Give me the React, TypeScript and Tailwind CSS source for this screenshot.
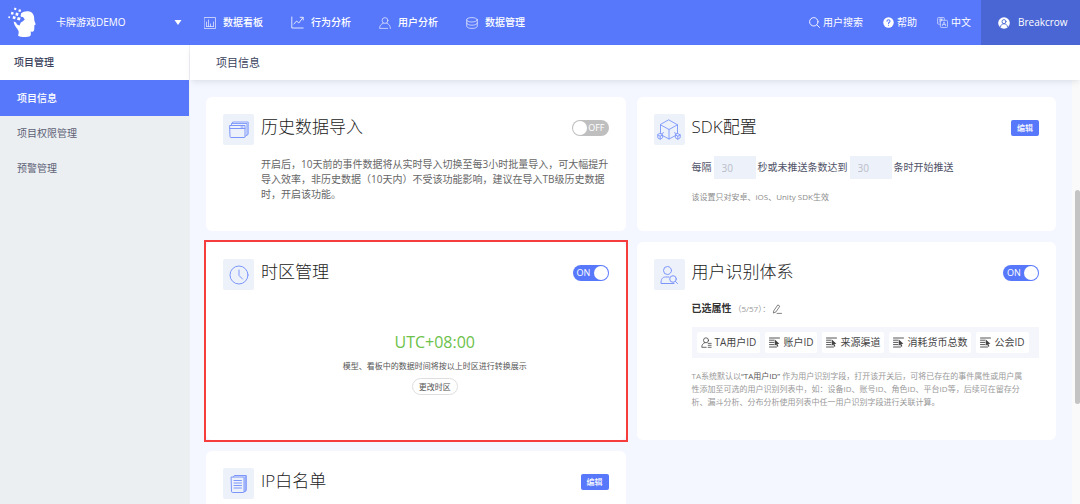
import type { ReactNode } from "react";

const navItems = [
  { label: "数据看板", icon: <BoardIcon /> },
  { label: "行为分析", icon: <TrendIcon /> },
  { label: "用户分析", icon: <UserIcon /> },
  { label: "数据管理", icon: <DatabaseIcon /> },
];

const toolItems = [
  { label: "用户搜索", icon: <SearchIcon /> },
  { label: "帮助", icon: <HelpIcon /> },
  { label: "中文", icon: <LanguageIcon /> },
];

const menuItems = ["项目信息", "项目权限管理", "预警管理"];

const attributes = ["TA用户ID", "账户ID", "来源渠道", "消耗货币总数", "公会ID"];

function Svg({ size, className, children }: { size: number; className?: string; children: ReactNode }) {
  return (
    <svg
      width={size}
      height={size}
      viewBox={`0 0 ${size} ${size}`}
      fill="none"
      stroke="currentColor"
      strokeLinecap="round"
      strokeLinejoin="round"
      className={`shrink-0 ${className ?? ""}`}
      aria-hidden="true"
    >
      {children}
    </svg>
  );
}

function Logo() {
  return (
    <svg width="28" height="31" viewBox="0 0 28 31" fill="white" aria-hidden="true">
      <path d="M13 6.5C15 4.6 17.5 4 20 4.2C24.4 4.6 26.4 8 26.2 12C26.2 13.6 26.8 15 27.6 17C27.8 17.8 27 18 26.4 18.2L26.2 22.4C26 24.4 24.8 24.8 22.8 24.6V27.8C22.8 29.5 20 30 17 30C14 30 11 29.5 10 28.5C11.2 25.6 11 23.8 9 21.5C7 19 6 17.2 5.7 14.5L8 15.5L9 17.5L11.5 18.5L12.8 15.5L14.5 14.5L16.8 12.5L15 10L12.8 9.8Z" />
      <path d="M6.5.6l2 .6-.6 2-2-.6zM10.9 2.2l2.2.6-.6 2.2-2.2-.6zM3.4 4.8l2.4.6-.6 2.4-2.4-.6zM8 5.6l2.6.7-.7 2.6-2.6-.7zM.6 9.2l1.6.4-.4 1.6-1.6-.4zM5.2 9l2.6.7-.7 2.6-2.6-.7zM9.8 10l2.8.8-.8 2.8-2.8-.8zM13.3 6.4l2.6.7-.7 2.6-2.6-.7z" />
    </svg>
  );
}

function BoardIcon() {
  return (
    <Svg size={12} className="opacity-80">
      <path d="M.5.5h11v11H.5zM2.5 9.5V5M4.5 9.5V3M6.5 9.5V7M9.5 9.5V5M2.5 9.5h7" strokeWidth="0.8" />
    </Svg>
  );
}

function TrendIcon() {
  return (
    <Svg size={13} className="opacity-90">
      <path d="M.8 1v11h11.4M3 8l2.6-3 2.2 2L12 1.5M9.2 1.3h3V4" strokeWidth="0.9" />
    </Svg>
  );
}

function UserIcon() {
  return (
    <Svg size={12} className="opacity-80">
      <circle cx="6" cy="3.5" r="2.9" strokeWidth="0.8" />
      <path d="M4.3 6.2C2 7 .6 8.8.6 11.4h8M7.7 6.2C10 7 11.4 8.8 11.4 11.4" strokeWidth="0.8" />
    </Svg>
  );
}

function DatabaseIcon() {
  return (
    <Svg size={12} className="opacity-80">
      <ellipse cx="6" cy="2.8" rx="5.3" ry="2.2" strokeWidth="0.8" />
      <path d="M.7 2.8v6.4c0 1.3 2.4 2.2 5.3 2.2s5.3-.9 5.3-2.2V2.8M.7 6c0 1.3 2.4 2.2 5.3 2.2S11.3 7.3 11.3 6" strokeWidth="0.8" />
    </Svg>
  );
}

function SearchIcon() {
  return (
    <Svg size={11}>
      <circle cx="4.8" cy="4.8" r="4.2" strokeWidth="0.9" />
      <path d="M8 8l2.5 2.5" strokeWidth="0.9" />
    </Svg>
  );
}

function HelpIcon() {
  return (
    <Svg size={11}>
      <circle cx="5.5" cy="5.5" r="5.2" fill="white" stroke="none" />
      <path d="M4 4.3C4 2.3 7 2.3 7 4.2C7 5.3 5.5 5.3 5.5 6.6M5.5 8.2v.1" stroke="#5878fb" strokeWidth="1.1" />
    </Svg>
  );
}

function LanguageIcon() {
  return (
    <Svg size={11} className="opacity-80">
      <path d="M7.3 3V1.3Q7.3.5 6.5.5h-5Q.6.5.6 1.3v5q0 .9.9.9h1.8M2.2 2.2h3.3M3.9 1.6v1.3M2.3 5.2l2.7-3M2.6 3l1.2 1.5" strokeWidth="0.7" />
      <path d="M4.6 3.3h4.9q1 0 1 1v5.2q0 1-1 1H4.4q-1 0-1-1V4.4q0-1 1.2-1.1zM5.2 8.8L7 4.8l1.8 4M5.9 7.5h2.2" strokeWidth="0.7" />
    </Svg>
  );
}

function AvatarIcon() {
  return (
    <Svg size={12}>
      <circle cx="6" cy="6" r="5.8" fill="white" stroke="none" />
      <circle cx="6" cy="4.6" r="2" stroke="#4a66d4" strokeWidth="0.9" />
      <path d="M2.5 9.7C2.8 7.7 4.2 6.8 6 6.8s3.2.9 3.5 2.9" stroke="#4a66d4" strokeWidth="0.9" />
    </Svg>
  );
}

function WindowIcon() {
  return (
    <Svg size={20}>
      <path d="M1 5.5h15v11.3q0 .7-.7.7H1.7q-.7 0-.7-.7zM1 8.5h15M12 7h2" />
      <path d="M2.5 5.5V3.5H18V15l-2 1.5M3 3.5L3.7 2h15.5v12L18 15.5" strokeWidth="0.9" />
    </Svg>
  );
}

function CubeIcon() {
  return (
    <Svg size={24}>
      <path d="M12 2l8.5 4.8v9.7L12 21l-8.5-4.5V6.8zM3.5 6.8L12 11.5l8.5-4.7M12 11.5V21M3.5 16.5l3-1.8M20.5 16.5l-3-1.8" strokeWidth="0.9" />
      <path d="M3.2 15.5l2.4 1.4v2.9l-2.4 1.4-2.4-1.4v-2.9zM.8 16.9l2.4 1.3 2.4-1.3M3.2 18.2v3M20.8 15.5l2.4 1.4v2.9l-2.4 1.4-2.4-1.4v-2.9zM18.4 16.9l2.4 1.3 2.4-1.3M20.8 18.2v3" fill="#edf1fa" strokeWidth="0.9" />
    </Svg>
  );
}

function ClockIcon() {
  return (
    <Svg size={20}>
      <circle cx="10" cy="10" r="9" />
      <path d="M10 5v5.5l3.5 3.5" />
    </Svg>
  );
}

function UserSearchIcon() {
  return (
    <Svg size={20}>
      <circle cx="8.5" cy="5.5" r="4" />
      <path d="M10 12H6.5C3.5 12 2 14 2 18.5h13" />
      <circle cx="14" cy="14" r="3.3" />
      <path d="M16.5 16.5l2 2" />
    </Svg>
  );
}

function ListIcon() {
  return (
    <Svg size={20}>
      <path d="M2.5 3H15v14.5q0 1-1 1H3.5q-1 0-1-1zM4.5 3l.8-1.500h12v15L15 18M16.2 2v15.5" />
      <path d="M5 6.5h7.5M5 9h7.5M5 11.5h7.5M5 14h7.5" />
    </Svg>
  );
}

function AttributeIcon({ user }: { user: boolean }) {
  if (user) {
    return (
      <Svg size={11}>
        <circle cx="5" cy="3.3" r="2.5" strokeWidth="0.8" />
        <path d="M3.8 5.6C1.9 6.4.8 7.8.8 10.3h4.4M7.2 6.4h3M7.2 8.3h3M7.2 10.3h3" strokeWidth="0.8" />
      </Svg>
    );
  }
  return (
    <Svg size={11}>
      <path d="M.5 1h10M.5 3.2h4.5M.5 5.4h4.5M.5 7.6h4.5M.5 10h7" strokeWidth="0.9" />
      <path d="M5.8 2.5l4.6 4.2-2 .3 1 2.3-1.2.5-1-2.3-1.4 1.2z" fill="currentColor" stroke="none" />
    </Svg>
  );
}

function EditIcon() {
  return (
    <Svg size={10}>
      <path d="M2 6.5L5.8.9l2 1.3L4 7.9l-2.3 1zM5 9.4h4.5" strokeWidth="0.8" />
    </Svg>
  );
}

function Toggle({ label, on }: { label: string; on?: boolean }) {
  return (
    <button
      type="button"
      role="switch"
      aria-checked={!!on}
      aria-label={label}
      className={
        on
          ? "flex h-4 w-9 items-center justify-between rounded-full bg-[#5878fb] pr-px pl-1 text-white"
          : "flex h-4 w-[37px] flex-row-reverse items-center justify-between rounded-full bg-[#bfbfbf] pr-1 pl-px text-white"
      }
    >
      <span className="text-[9px] leading-4">{on ? "ON" : "OFF"}</span>
      <span className="size-3.5 rounded-full bg-white" />
    </button>
  );
}

function EditButton() {
  return (
    <button type="button" className="h-4 w-7 rounded-xs bg-[#5878fb] text-[8px] leading-4 font-medium text-white">
      编辑
    </button>
  );
}

type CardProps = {
  title: string;
  icon: ReactNode;
  action: ReactNode;
  highlighted?: boolean;
  children?: ReactNode;
};

function Card({ title, icon, action, highlighted, children }: CardProps) {
  return (
    <section className="relative flex flex-col rounded-md bg-white px-[17px] pt-[17px]">
      <div className="flex items-start gap-[7px]">
        <div className="flex size-[31px] shrink-0 items-center justify-center rounded-xs bg-[#edf1fa] text-[#7c96fa]">{icon}</div>
        <h2 className="flex-1 text-[17px] leading-[26px] font-light text-[#222]">{title}</h2>
        <div className="flex pt-1.5">{action}</div>
      </div>
      {children}
      {highlighted && <div className="pointer-events-none absolute -inset-0.5 border-2 border-[#f63c3c]" />}
    </section>
  );
}

function Header() {
  return (
    <header className="flex h-[45px] shrink-0 items-center bg-[#5878fb] text-[10px] text-white">
      <div className="flex w-[189px] items-center pl-2">
        <Logo />
        <button type="button" className="ml-5 flex flex-1 items-center justify-between pr-[7px]">
          卡牌游戏DEMO
          <svg width="8" height="5" viewBox="0 0 8 5" fill="currentColor" aria-hidden="true">
            <path d="M.5 0h7L4 5z" />
          </svg>
        </button>
      </div>
      <nav className="flex gap-7 pl-[15px] font-medium">
        {navItems.map((item) => (
          <a key={item.label} href="#" className="flex items-center gap-[7px]">
            {item.icon}
            {item.label}
          </a>
        ))}
      </nav>
      <div className="ml-auto flex gap-5 pr-2.5">
        {toolItems.map((item) => (
          <a key={item.label} href="#" className="flex items-center gap-[3px]">
            {item.icon}
            {item.label}
          </a>
        ))}
      </div>
      <button type="button" className="flex h-full w-[99px] items-center gap-2 bg-[#4a66d4] pl-[17px]">
        <AvatarIcon />
        Breakcrow
      </button>
    </header>
  );
}

function Sidebar() {
  return (
    <aside className="w-[189px] shrink-0 bg-[#ebeff2] text-[10px]">
      <h1 className="bg-white pl-3.5 leading-[35px] font-medium text-[#3a3f5c]">项目管理</h1>
      <nav>
        {menuItems.map((item, index) => (
          <a
            key={item}
            href="#"
            className={
              index === 0
                ? "block bg-[#5878fb] pl-[17px] leading-9 font-medium text-white"
                : "block pl-[17px] leading-[35px] text-[#5d6175]"
            }
          >
            {item}
          </a>
        ))}
      </nav>
    </aside>
  );
}

export default function App() {
  return (
    <div className="flex h-screen flex-col overflow-hidden font-['Open_Sans','Noto_Sans_CJK_SC',sans-serif]" lang="zh-CN">
      <Header />
      <div className="flex min-h-0 flex-1">
        <Sidebar />
        <main className="flex min-w-0 flex-1 flex-col border-l border-[#eef0f4]">
          <div className="z-10 shrink-0 bg-white pl-[26px] text-[11px] leading-[35px] text-[#3a3f5c] shadow-md shadow-gray-500/10">
            项目信息
          </div>
          <div className="flex min-h-0 flex-1">
            <div className="grid flex-1 auto-rows-max grid-cols-2 gap-[11px] overflow-hidden bg-[#f4f7ff] px-4 pt-[17px]">
              <Card title="历史数据导入" icon={<WindowIcon />} action={<Toggle label="历史数据导入" />}>
                <p className="mt-3 mb-[29px] pl-[38px] text-[10px] leading-[15px] text-[#666]">
                  开启后，10天前的事件数据将从实时导入切换至每3小时批量导入，可大幅提升导入效率，非历史数据（10天内）不受该功能影响，建议在导入TB级历史数据时，开启该功能。
                </p>
              </Card>

              <Card title="SDK配置" icon={<CubeIcon />} action={<EditButton />}>
                <div className="mt-[11px] flex items-center gap-0.5 pl-[38px] text-[10px] text-[#4f5368]">
                  <label htmlFor="interval">每隔</label>
                  <input id="interval" disabled defaultValue="30" className="h-[23px] w-[42px] bg-[#edf1fa] pl-2 text-[#b9bdc9]" />
                  <label htmlFor="count">秒或未推送条数达到</label>
                  <input id="count" disabled defaultValue="30" className="h-[23px] w-[42px] bg-[#edf1fa] pl-2 text-[#b9bdc9]" />
                  <span>条时开始推送</span>
                </div>
                <p className="mt-3 pl-[38px] text-[8px] leading-3 text-[#8c8c8c]">该设置只对安卓、iOS、Unity SDK生效</p>
              </Card>

              <Card title="时区管理" icon={<ClockIcon />} action={<Toggle label="时区管理" on />} highlighted>
                <div className="flex flex-col items-center pt-10 pl-[38px]">
                  <p className="text-[16px] leading-6 text-[#6cc24a]">UTC+08:00</p>
                  <p className="mt-1.5 text-[8px] leading-3 text-[#555]">模型、看板中的数据时间将按以上时区进行转换展示</p>
                  <button type="button" className="mt-1.5 h-[17px] rounded-full border border-[#dedede] px-1.5 text-[8px] leading-[15px] text-[#555]">
                    更改时区
                  </button>
                </div>
              </Card>

              <Card title="用户识别体系" icon={<UserSearchIcon />} action={<Toggle label="用户识别体系" on />}>
                <div className="mb-8 pl-[38px]">
                  <div className="mt-[11px] flex items-center text-[10px] leading-[15px] text-[#333]">
                    <span className="font-bold">已选属性</span>
                    <span className="ml-0.5 text-[8px] text-[#999]">（5/57）：</span>
                    <button type="button" aria-label="编辑属性" className="ml-0.5 text-[#666]">
                      <EditIcon />
                    </button>
                  </div>
                  <ul className="mt-[11px] flex gap-[5px] bg-[#f5f6fb] p-[5px] text-[10px] text-[#444]">
                    {attributes.map((name, index) => (
                      <li key={name} className="flex h-[21px] items-center gap-[3px] rounded-xs bg-white px-1 whitespace-nowrap">
                        <AttributeIcon user={index === 0} />
                        {name}
                      </li>
                    ))}
                  </ul>
                  <p className="mt-[11px] max-w-[334px] text-[8px] leading-[13px] text-[#999]">
                    TA系统默认以<span className="text-[#555]">“TA用户ID”</span> 作为用户识别字段，打开该开关后，可将已存在的事件属性或用户属性添加至可选的用户识别列表中，如：设备ID、账号ID、角色ID、平台ID等，后续可在留存分析、漏斗分析、分布分析使用列表中任一用户识别字段进行关联计算。
                  </p>
                </div>
              </Card>

              <Card title="IP白名单" icon={<ListIcon />} action={<EditButton />}>
                <div className="h-20" />
              </Card>
            </div>
            <div className="w-2 bg-[#fafafa] pt-[110px]">
              <div className="ml-auto h-[214px] w-[5px] rounded-full bg-[#c4c4c4]" />
            </div>
          </div>
        </main>
      </div>
    </div>
  );
}
